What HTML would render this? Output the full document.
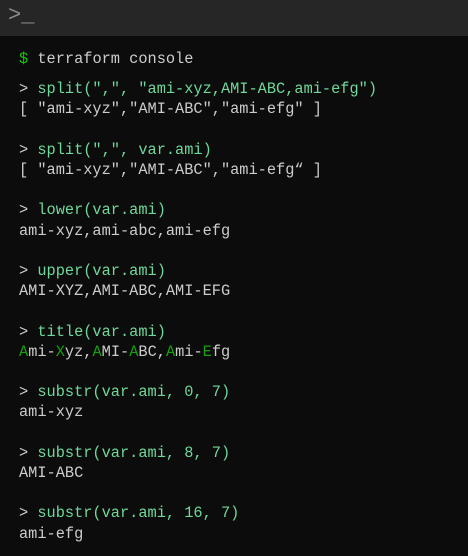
<!DOCTYPE html>
<html><head><style>
html,body{margin:0;padding:0;width:468px;height:556px;background:#0c0c0c;overflow:hidden}
.top{height:36px;background:#262626;position:relative}
.top span{position:absolute;left:8px;top:3px;color:#8a8a8a;font:22px "Liberation Mono",monospace}
pre{margin:0;position:absolute;left:19px;top:49px;font:15.3px/20.2px "Liberation Mono",monospace;color:#cccccc}
.g{color:#16c60c}.c{color:#6fd89a}.t{color:#13a10e}
</style></head><body>
<div class="top"><span>&gt;_</span></div>
<pre><span class="g">$</span> terraform console
<span style="display:block;height:10px"></span>&gt; <span class="c">split(",", "ami-xyz,AMI-ABC,ami-efg")</span>
[ "ami-xyz","AMI-ABC","ami-efg" ]

&gt; <span class="c">split(",", var.ami)</span>
[ "ami-xyz","AMI-ABC","ami-efg“ ]

&gt; <span class="c">lower(var.ami)</span>
ami-xyz,ami-abc,ami-efg

&gt; <span class="c">upper(var.ami)</span>
AMI-XYZ,AMI-ABC,AMI-EFG

&gt; <span class="c">title(var.ami)</span>
<span class="t">A</span>mi-<span class="t">X</span>yz,<span class="t">A</span>MI-<span class="t">A</span>BC,<span class="t">A</span>mi-<span class="t">E</span>fg

&gt; <span class="c">substr(var.ami, 0, 7)</span>
ami-xyz

&gt; <span class="c">substr(var.ami, 8, 7)</span>
AMI-ABC

&gt; <span class="c">substr(var.ami, 16, 7)</span>
ami-efg</pre>
</body></html>
